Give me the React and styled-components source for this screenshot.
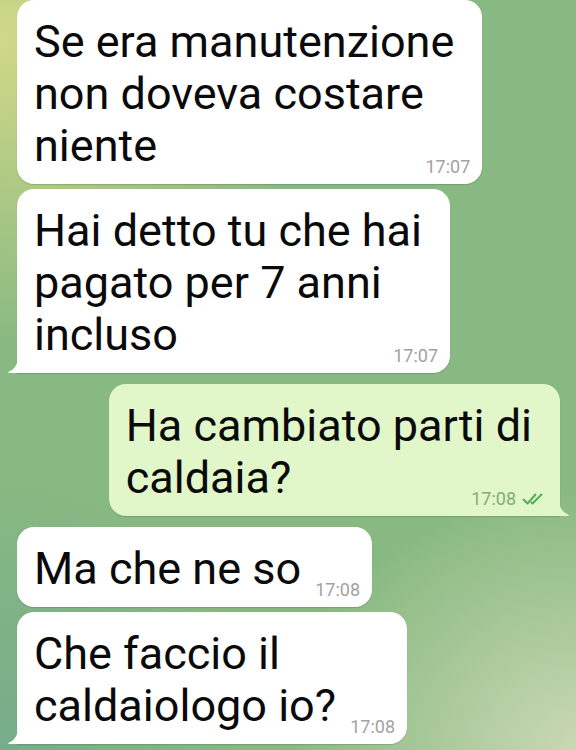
import styled, { createGlobalStyle } from 'styled-components';

const GlobalStyle = createGlobalStyle`
    html, body {
        margin: 0;
        padding: 0;
        height: 100%;
    }
    body {
        font-family: Roboto, "Noto Sans", sans-serif;
        overflow: hidden;
    }
`

const Chat = styled.div`
    width: 576px;
    height: 750px;
    box-sizing: border-box;
    display: flex;
    flex-direction: column;
    padding: 0 16px 0 17px;
    overflow: hidden;
    background:
        radial-gradient(ellipse 75% 55% at 0% 5%, rgba(212, 218, 136, 0.95), rgba(212, 218, 136, 0) 75%),
        radial-gradient(ellipse 65% 45% at 100% 100%, rgba(202, 216, 178, 1), rgba(202, 216, 178, 0) 78%),
        radial-gradient(ellipse 55% 45% at 0% 100%, rgba(118, 172, 138, 1), rgba(118, 172, 138, 0) 80%),
        #88b982;
`

const Group = styled.div`
    display: flex;
    flex-direction: column;
    align-items: ${p => (p.$out ? 'flex-end' : 'flex-start')};
    gap: 5px;
    margin-bottom: ${p => (p.$last ? 0 : '11px')};
`

const Bubble = styled.div`
    position: relative;
    width: fit-content;
    box-sizing: border-box;
    padding: 16px 28px 12px 17px;
    background: ${p => (p.$out ? '#e1f6c9' : '#ffffff')};
    border-radius: 17px;
    border-bottom-left-radius: ${p => (p.$tail && !p.$out ? 0 : '17px')};
    border-bottom-right-radius: ${p => (p.$tail && p.$out ? 0 : '17px')};
    box-shadow: 0 1px 1px rgba(40, 70, 40, 0.22);
    color: #0a0a0a;
    font-size: 45px;
    line-height: 52px;
    white-space: nowrap;
`

const Spacer = styled.span`
    display: inline-block;
    width: ${p => (p.$out ? '80px' : '43px')};
    height: 1px;
`

const Meta = styled.span`
    position: absolute;
    right: 12px;
    bottom: 8px;
    display: flex;
    align-items: center;
    gap: 6px;
    font-size: 18px;
    line-height: 18px;
    color: ${p => (p.$out ? '#84ad78' : '#a2a2a2')};
`

const Tail = styled.svg`
    position: absolute;
    bottom: 0;
    width: 10px;
    height: 17px;
    ${p => (p.$out ? 'right: -9px;' : 'left: -9px; transform: scaleX(-1);')}
`

const Checks = () => (
    <svg width="26" height="12" viewBox="0 0 26 12" fill="none">
        <path d="M1.5 6.5 L5.5 10.5 L13.5 1.5" stroke="#4fae55" strokeWidth="1.9" strokeLinecap="round" strokeLinejoin="round" />
        <path d="M9.5 9.5 L10.5 10.5 L19.5 1.5" stroke="#4fae55" strokeWidth="1.9" strokeLinecap="round" strokeLinejoin="round" />
    </svg>
)

const Message = ({ lines, time, out, tail }) => (
    <Bubble $out={out} $tail={tail}>
        {lines.map((line, i) => (
            <span key={i}>
                {line}
                {i < lines.length - 1 ? <br /> : <Spacer $out={out} />}
            </span>
        ))}
        <Meta $out={out}>
            {time}
            {out && <Checks />}
        </Meta>
        {tail && (
            <Tail $out={out} viewBox="0 0 10 17">
                <path d="M0 0 C0 8 3 13 9 15.5 C10 16 10 17 9 17 L0 17 Z" fill={out ? '#e1f6c9' : '#ffffff'} />
            </Tail>
        )}
    </Bubble>
)

export default function App() {
    return (
        <>
            <GlobalStyle />
            <Chat>
                <Group>
                    <Message lines={['Se era manutenzione', 'non doveva costare', 'niente']} time="17:07" />
                    <Message lines={['Hai detto tu che hai', 'pagato per 7 anni', 'incluso']} time="17:07" tail />
                </Group>
                <Group $out>
                    <Message lines={['Ha cambiato parti di', 'caldaia?']} time="17:08" out tail />
                </Group>
                <Group $last>
                    <Message lines={['Ma che ne so']} time="17:08" />
                    <Message lines={['Che faccio il', 'caldaiologo io?']} time="17:08" tail />
                </Group>
            </Chat>
        </>
    )
}
